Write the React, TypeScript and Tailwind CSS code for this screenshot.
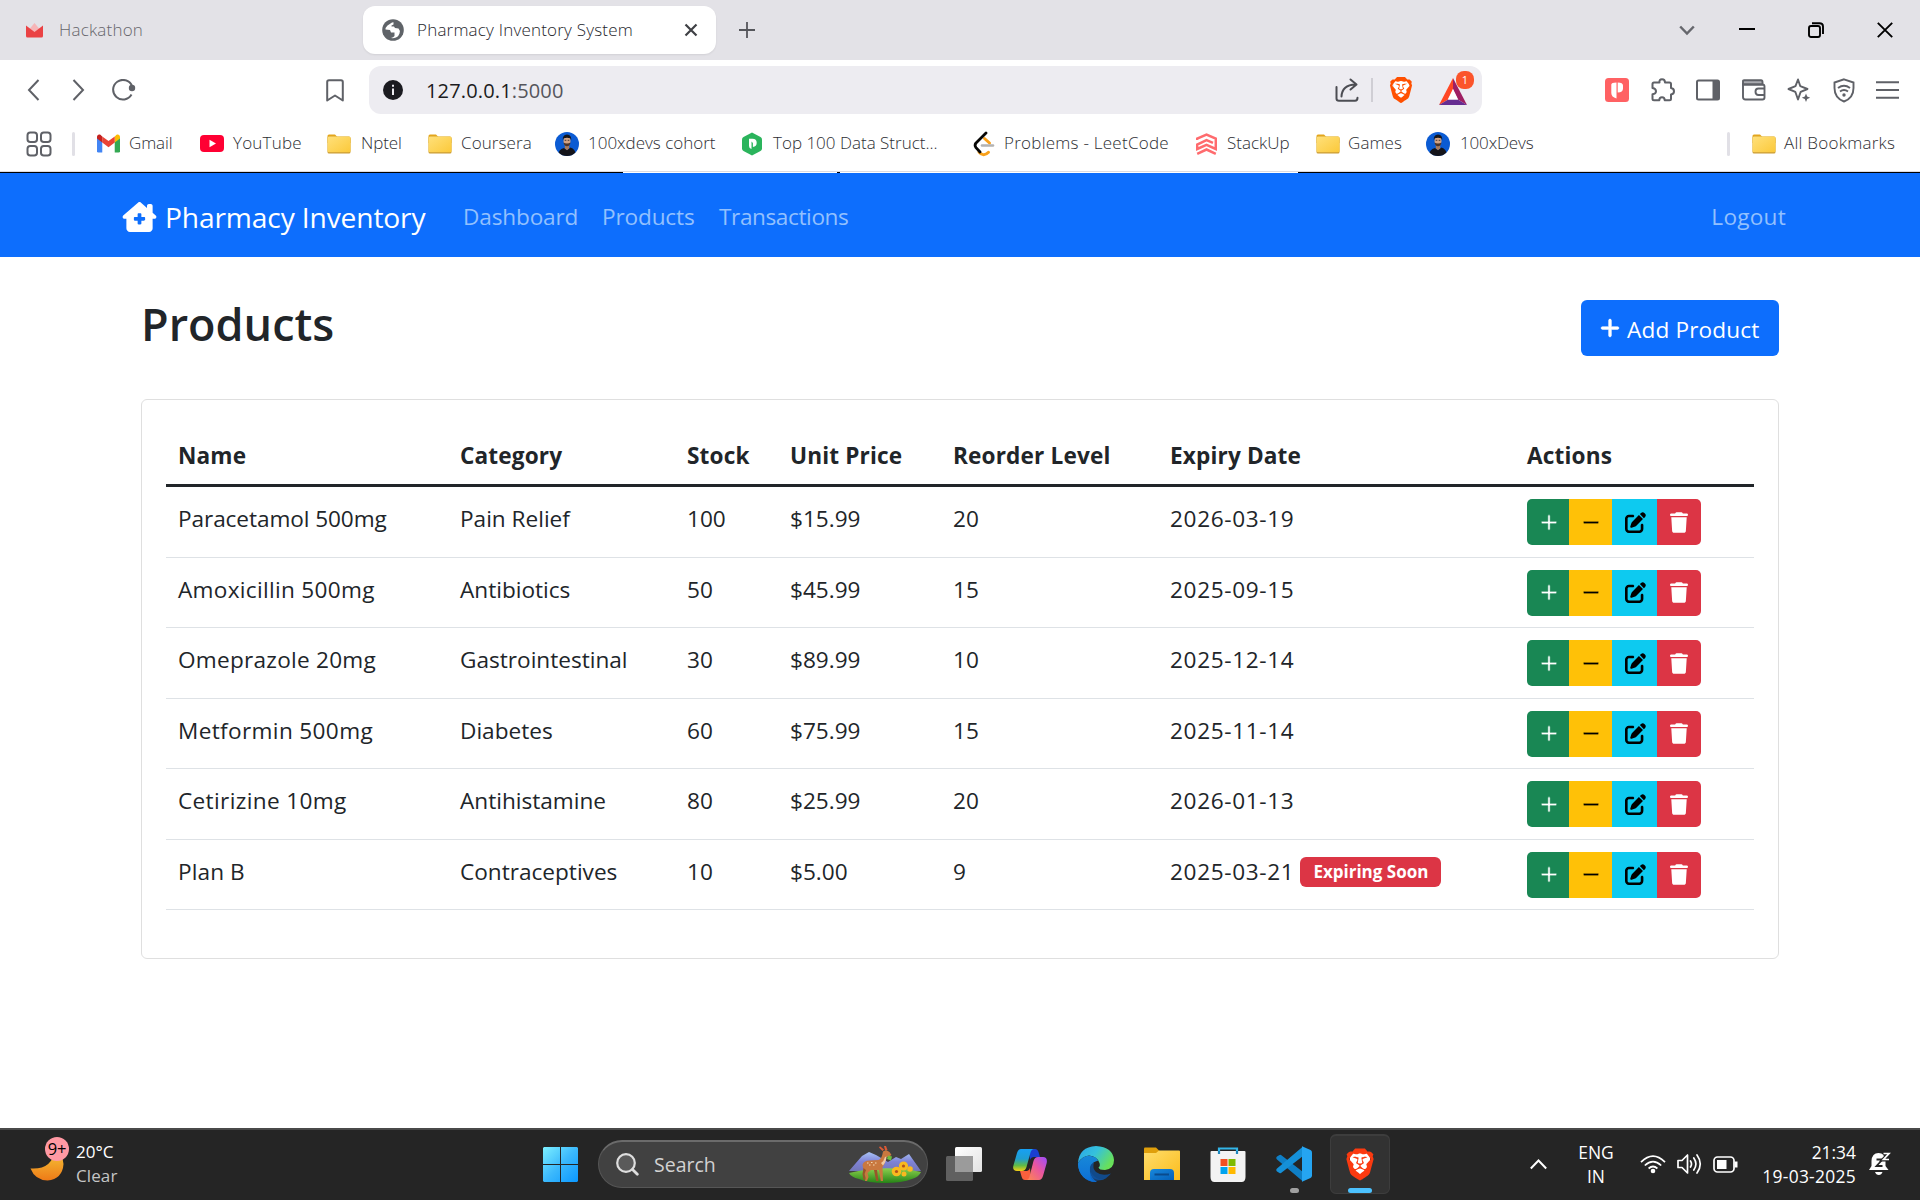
import React from "react";
import { FaHouseChimneyMedical, FaPlus, FaMinus, FaPenToSquare, FaTrash } from "react-icons/fa6";
import { SiBrave } from "react-icons/si";

const products = [
  ["Paracetamol 500mg", "Pain Relief", "100", "$15.99", "20", "2026-03-19"],
  ["Amoxicillin 500mg", "Antibiotics", "50", "$45.99", "15", "2025-09-15"],
  ["Omeprazole 20mg", "Gastrointestinal", "30", "$89.99", "10", "2025-12-14"],
  ["Metformin 500mg", "Diabetes", "60", "$75.99", "15", "2025-11-14"],
  ["Cetirizine 10mg", "Antihistamine", "80", "$25.99", "20", "2026-01-13"],
  ["Plan B", "Contraceptives", "10", "$5.00", "9", "2025-03-21"],
];

const nameTracking = [
  "tracking-[-0.08px]",
  "tracking-[0.3px]",
  "tracking-[0.25px]",
  "tracking-[0.35px]",
  "tracking-[0.35px]",
  "tracking-[0.1px]",
];

function Folder() {
  return (
    <svg width="24" height="20" viewBox="0 0 24 20">
      <defs>
        <linearGradient id="fold" x1="0" y1="0" x2="1" y2="1">
          <stop offset="0" stopColor="#ffe07a" />
          <stop offset="1" stopColor="#fbc93a" />
        </linearGradient>
      </defs>
      <path d="M.5 2Q.5 .5 2 .5h6l2.500 2.500h11q2 0 2 2v4H.5z" fill="#e3a51c" />
      <rect x=".5" y="2.500" width="23" height="17" rx="1.500" fill="#c99b35" />
      <rect x=".5" y="2.500" width="23" height="15.800" rx="1.500" fill="url(#fold)" />
    </svg>
  );
}

function Gmail() {
  return (
    <svg width="23" height="19" viewBox="0 0 24 19">
      <path d="M0 3v14.500Q0 19 1.500 19H5.500V7z" fill="#4285f4" />
      <path d="M24 3v14.500q0 1.500-1.500 1.500h-4V7z" fill="#34a853" />
      <path d="M18.500 2.200V8.500L24 4.400V2.700C24 0 21 -.8 19.200 1.600z" fill="#fbbc04" />
      <path d="M5.500 8.500V2.200L12 7l6.500-4.800v6.300L12 13.400z" fill="#ea4335" />
      <path d="M0 2.700v1.700l5.500 4.100V2.200L4.800 1.600C3 -.8 0 0 0 2.700z" fill="#c5221f" />
    </svg>
  );
}

function YouTube() {
  return (
    <svg width="24" height="17" viewBox="0 0 24 17">
      <rect width="24" height="17" rx="4" fill="#ff0033" />
      <path d="M9.500 4.800v7.400L16 8.500z" fill="#fff" />
    </svg>
  );
}

function Avatar() {
  return (
    <svg width="24" height="24" viewBox="0 0 24 24">
      <defs>
        <clipPath id="round"><circle cx="12" cy="12" r="12" /></clipPath>
      </defs>
      <g clipPath="url(#round)">
        <rect width="24" height="24" fill="#0b5bd3" />
        <path d="M3 24Q3 17.500 9 16l3 2 3.500-2.500q5 1.500 6 9z" fill="#14141a" />
        <path d="M9.800 12h4.400v4.500L12 18.200l-2.200-1.700z" fill="#a87a5e" />
        <ellipse cx="12" cy="9" rx="3.500" ry="4.800" fill="#d3a283" />
        <path d="M7.800 8.500Q7.200 2.800 12 2.500q4.800.3 4.200 6L15.300 6.300q-3.300-1-6.600 0z" fill="#15151b" />
        <path d="M8.600 10.500q1.200 1 3.400 1t3.400-1q-.3 3.800-3.400 3.800t-3.400-3.800z" fill="#4a342c" />
        <path d="M9.700 8.300h1.600M12.700 8.300h1.600" stroke="#251c1c" strokeWidth=".8" />
      </g>
    </svg>
  );
}

function PepHex() {
  return (
    <svg width="22" height="24" viewBox="0 0 22 24">
      <path d="M11 .5 19.500 5q1.500.8 1.500 2.400v9.200q0 1.600-1.500 2.400L11 23.500 2.500 19Q1 18.200 1 16.600V7.400Q1 5.800 2.500 5z" fill="#2bb45c" />
      <path d="M8 6.800h3.500q4.200 0 4.200 4t-3.800 4.100V11L10.500 9.500V17q-2.500-.5-2.500-3z" fill="#fff" />
    </svg>
  );
}

function LeetCode() {
  return (
    <svg width="22" height="26" viewBox="0 0 22 26" fill="none" strokeLinecap="round" strokeLinejoin="round">
      <path d="M11.500 7.500 16.500 12" stroke="#f9a11b" strokeWidth="3" />
      <path d="M9 14.500h11" stroke="#b3b3b3" strokeWidth="2.600" />
      <path d="M6 21q4.500 5.500 9.500.3" stroke="#f9a11b" strokeWidth="3" />
      <path d="M13 2 3 12q-1.800 2.200 0 4.600L7 21" stroke="#070706" strokeWidth="2.800" />
    </svg>
  );
}

function StackUp() {
  return (
    <svg width="21" height="22" viewBox="0 0 21 22" fill="none" stroke="#ff6b6e" strokeWidth="2.500">
      <path d="M1.200 7V5.500L10.500 1.500l9.300 4.200V16L10.500 11.800 1.200 16v-4.500L10.500 7l6.500 2.800" />
      <path d="M1.200 20.800 10.500 16.500l9.300 4.300" />
    </svg>
  );
}

const bookmarks = [
  { w: "w-[103px]", gap: "gap-[9px]", t: "tracking-[-0.1px]", icon: <Gmail />, label: "Gmail" },
  { w: "w-[127px]", gap: "gap-[9px]", t: "tracking-[0.2px]", icon: <YouTube />, label: "YouTube" },
  { w: "w-[101px]", gap: "gap-[10px]", t: "tracking-[-0.1px]", icon: <Folder />, label: "Nptel" },
  { w: "w-[127px]", gap: "gap-[9px]", t: "tracking-[0.1px]", icon: <Folder />, label: "Coursera" },
  { w: "w-[186px]", gap: "gap-[9px]", t: "tracking-[0px]", icon: <Avatar />, label: "100xdevs cohort" },
  { w: "w-[232px]", gap: "gap-[10px]", t: "tracking-[0px]", icon: <PepHex />, label: "Top 100 Data Struct..." },
  { w: "w-[223px]", gap: "gap-[9px]", t: "tracking-[0.25px]", icon: <LeetCode />, label: "Problems - LeetCode" },
  { w: "w-[120px]", gap: "gap-[10px]", t: "tracking-[0px]", icon: <StackUp />, label: "StackUp" },
  { w: "w-[110px]", gap: "gap-[8px]", t: "tracking-[0.1px]", icon: <Folder />, label: "Games" },
  { w: "w-[130px]", gap: "gap-[10px]", t: "tracking-[-0.15px]", icon: <Avatar />, label: "100xDevs" },
];

function TabStrip() {
  return (
    <div className="flex h-[60px] items-center bg-[#e3e2e7]">
      <div className="flex w-[363px] items-center pl-[26px]">
        <svg width="17" height="15" viewBox="0 0 17 15">
          <path d="M3.500 6 8.500 0l5 6-5 5z" fill="#f6b5b7" />
          <path d="M0 2.500 8.500 9 17 2.500V13q0 1.500-1.500 1.500h-14Q0 14.500 0 13z" fill="#ea4244" />
        </svg>
        <span className="ml-[16px] text-[17px] font-light tracking-[0.2px] text-[#66666c]">Hackathon</span>
      </div>
      <div className="flex h-[48px] w-[353px] items-center rounded-[12px] bg-white pl-[19px] shadow-[0_1px_2px_rgba(0,0,0,0.08)]">
        <svg width="22" height="22" viewBox="0 0 22 22">
          <circle cx="11" cy="11" r="10.800" fill="#5f6368" />
          <path d="M10 3.500 5.500 6.500Q3 9 3.500 10.500l4.500.5 1 2.500h3.500V17q-1 1.500-3.500 2 6.500 1 8.500-4.500.8-3.500-1-5l-3.500-.5-1-1.500H9.500V6.500l2-1V3.200z" fill="#fff" />
        </svg>
        <span className="ml-[13px] w-[222px] whitespace-nowrap text-[17px] font-light tracking-[0.2px] text-[#25252b]">Pharmacy Inventory System</span>
        <svg className="ml-[45px]" width="14" height="14" viewBox="0 0 14 14" stroke="#3f4045" strokeWidth="2.200">
          <path d="M1.500 1.500l11 11M12.500 1.500l-11 11" />
        </svg>
      </div>
      <svg className="ml-[23px]" width="16" height="16" viewBox="0 0 16 16" stroke="#55565b" strokeWidth="1.800">
        <path d="M8 0v16M0 8h16" />
      </svg>
      <div className="ml-auto flex items-center pr-[27px]">
        <svg width="16" height="11" viewBox="0 0 16 11" fill="none" stroke="#66676d" strokeWidth="2.500"><path d="M1.200 1.500 8 8.500l6.800-7" /></svg>
        <svg className="ml-[44px]" width="16" height="16" viewBox="0 0 16 16" stroke="#000" strokeWidth="2"><path d="M0 7h16" /></svg>
        <svg className="ml-[53px]" width="16" height="16" viewBox="0 0 16 16" fill="none" stroke="#000" strokeWidth="1.900">
          <rect x="1" y="4" width="11" height="11" rx="2" />
          <path d="M4 1.200h7.500Q15 1.200 15 4.500V12" />
        </svg>
        <svg className="ml-[53px]" width="16" height="16" viewBox="0 0 16 16" stroke="#000" strokeWidth="1.900"><path d="M.8.8l14.400 14.400M15.200.8.800 15.200" /></svg>
      </div>
    </div>
  );
}

function Toolbar() {
  return (
    <div className="flex h-[60px] items-center">
      <div className="flex w-[369px] items-center pl-[27px] text-[#5f6167]">
        <svg width="13" height="22" viewBox="0 0 13 22" fill="none" stroke="currentColor" strokeWidth="2"><path d="M11.500 1 2 11l9.500 10" /></svg>
        <svg className="ml-[32px]" width="13" height="22" viewBox="0 0 13 22" fill="none" stroke="currentColor" strokeWidth="2"><path d="M1.500 1 11 11l-9.500 10" /></svg>
        <svg className="ml-[27px]" width="24" height="22" viewBox="0 0 24 22" fill="none" stroke="currentColor" strokeWidth="2">
          <path d="M19.500 15.500A9.800 9.800 0 1 1 20 7" />
          <circle cx="20" cy="9" r="3.200" fill="currentColor" stroke="none" />
        </svg>
        <svg className="ml-[190px]" width="18" height="23" viewBox="0 0 18 23" fill="none" stroke="currentColor" strokeWidth="2" strokeLinejoin="round">
          <path d="M1.200 21.500V3q0-1.800 1.800-1.800h12q1.800 0 1.800 1.800v18.500L9 16.500z" />
        </svg>
      </div>
      <div className="flex h-[48px] w-[1113px] items-center rounded-[12px] bg-[#edecf1] pl-[14px]">
        <svg width="20" height="20" viewBox="0 0 20 20">
          <circle cx="10" cy="10" r="10" fill="#1b1b20" />
          <path d="M10 8.500V15M10 4.800v2" stroke="#edecf1" strokeWidth="2" />
        </svg>
        <span className="ml-[23px] pt-[1px] text-[20px] tracking-[0.15px] text-[#1b1b20]">127.0.0.1<span className="text-[#55555c]">:5000</span></span>
        <div className="ml-auto flex items-center pr-[8px]">
          <svg width="24" height="24" viewBox="0 0 24 24" fill="none" stroke="#4c4d53" strokeWidth="2" strokeLinecap="round" strokeLinejoin="round">
            <path d="M1.500 9v11.500Q1.500 22.800 4 22.800h16q2.500 0 2.500-3M6.500 18.500Q7 7 20.500 6.500M15.500 1.500l6 5-6 5" />
          </svg>
          <div className="ml-[12px] h-[24px] w-[2px] bg-[#cfced4]" />
          <div className="relative ml-[15px] flex items-center justify-center">
            <div className="absolute h-[20px] w-[15px] rounded-b-[8px] bg-white" />
            <SiBrave className="relative h-[30px] w-[26px] text-[#ff5000]" />
          </div>
          <div className="relative ml-[24px] h-[36px] w-[36px]">
            <svg className="absolute left-[1px] top-[6px]" width="28" height="27" viewBox="0 0 28 25" preserveAspectRatio="none">
              <path d="M14 0 0 25l9.200-5.200L14 11z" fill="#ff4724" />
              <path d="M14 0l14 25-9.200-5.200L14 11z" fill="#9e1f63" />
              <path d="M0 25h28l-9.200-5.200H9.200z" fill="#662d91" />
              <path d="M14 10 8.800 20h10.400z" fill="#fff" />
            </svg>
            <div className="absolute right-0 -top-[1px] flex h-[18px] w-[18px] items-center justify-center rounded-[8px] bg-[#fb542b] text-[11px] text-white">1</div>
          </div>
        </div>
      </div>
      <div className="flex flex-1 items-center justify-between pl-[123px] pr-[21px] text-[#5f6167]">
        <svg width="24" height="24" viewBox="0 0 24 24">
          <rect width="24" height="24" rx="3.500" fill="#ff6163" />
          <path d="M11.500 4.500Q6.300 4.500 6.300 6.500v8.500q0 4 5.200 5.500zM12.700 4.500q5.300.2 5.300 3v3q0 4-5.300 4z" fill="#fff" />
        </svg>
        <svg width="24" height="24" viewBox="0 0 24 24" fill="none" stroke="currentColor" strokeWidth="2" strokeLinejoin="round">
          <path d="M3 4.500h5.500Q8 1.200 11 1.200t3 3.300h4.500q1.500 0 1.500 1.500v4q3 .3 3 3.200T20 16.500v4.300q0 1.500-1.500 1.500h-4.800q0-3-2.700-3t-2.700 3H3q-1.500 0-1.500-1.500v-4.500q3.500-.3 3.500-3T1.500 10V6Q1.500 4.500 3 4.500z" />
        </svg>
        <svg width="24" height="22" viewBox="0 0 24 22" fill="none" stroke="currentColor" strokeWidth="2">
          <rect x="1" y="1.500" width="22" height="19" rx="1.500" />
          <path d="M16.500 1h6v20h-6z" fill="currentColor" stroke="none" />
        </svg>
        <svg width="24" height="22" viewBox="0 0 24 22" fill="none" stroke="currentColor" strokeWidth="1.900">
          <path d="M2 1.200h17q1.500 0 1.500 1.800v2.500H1V2.200q0-1 1-1z" fill="#aaabb0" />
          <path d="M1 4v14q0 2.500 2.500 2.500h17q2 0 2-2V7.500q0-2-2-2H1M22.500 9.500h-6q-3 0-3 3.200t3 3.300h6" />
        </svg>
        <svg width="24" height="24" viewBox="0 0 24 24" fill="none" stroke="currentColor" strokeWidth="1.900" strokeLinejoin="round">
          <path d="M11 1.500 13.300 8.200 20.500 11 13.700 13.800 11 21.500 8.300 13.800 1.500 11 8.500 8.200z" />
          <path d="M19 15.500l1.200 3 3 1.200-3 1.300-1.200 3-1.200-3-3-1.300 3-1.200z" fill="currentColor" stroke="none" />
        </svg>
        <svg width="22" height="25" viewBox="0 0 22 25" fill="none" stroke="currentColor" strokeWidth="1.900">
          <path d="M11 1.300 20.500 4.500V10q0 10-9.500 13.500Q1.500 20 1.500 10V4.500z" />
          <path d="M5 10q6-4.500 12 0M7 13.500q4-3 8 0" />
          <circle cx="11" cy="17" r="1.700" fill="currentColor" stroke="none" />
        </svg>
        <svg width="23" height="18" viewBox="0 0 23 18" stroke="currentColor" strokeWidth="2"><path d="M0 1.200h23M0 9h23M0 16.800h23" /></svg>
      </div>
    </div>
  );
}

function Bookmarks() {
  return (
    <div className="flex h-[51px] items-center whitespace-nowrap pb-[4px] text-[17px] font-light text-[#2d2e33]">
      <svg className="ml-[26px]" width="26" height="26" viewBox="0 0 26 26" fill="none" stroke="#5f6167" strokeWidth="2">
        <rect x="1.500" y="1.500" width="9.500" height="9.500" rx="2.800" />
        <rect x="15" y="1.500" width="9.500" height="9.500" rx="2.800" />
        <rect x="1.500" y="15" width="9.500" height="9.500" rx="2.800" />
        <rect x="15" y="15" width="9.500" height="9.500" rx="2.800" />
      </svg>
      <div className="ml-[20px] h-[24px] w-[3px] rounded bg-[#e1e0e6]" />
      <div className="ml-[22px] flex">
        {bookmarks.map((b, i) => (
          <div key={i} className={`flex items-center ${b.w} ${b.gap} ${b.t}`}>
            {b.icon}
            <span className="-mt-[2px]">{b.label}</span>
          </div>
        ))}
      </div>
      <div className="ml-auto h-[24px] w-[3px] rounded bg-[#e1e0e6]" />
      <div className="ml-[22px] flex w-[168px] items-center gap-[8px]">
        <Folder />
        <span className="-mt-[2px] tracking-[0.25px]">All Bookmarks</span>
      </div>
    </div>
  );
}

function Navbar() {
  return (
    <nav className="flex h-[84px] items-center bg-[#0d6efd] pl-[122px] pr-[134px] text-[22.6px] tracking-[-0.15px] text-[#92c0fe]">
      <FaHouseChimneyMedical className="mt-[3px] h-[30px] w-[35px] text-white" />
      <span className="ml-[8px] w-[298px] whitespace-nowrap pt-[4px] text-[28.2px] text-white">Pharmacy Inventory</span>
      <span className="w-[139px] pt-[4px]">Dashboard</span>
      <span className="w-[117px] pt-[4px]">Products</span>
      <span className="pt-[4px] tracking-[-0.4px]">Transactions</span>
      <span className="ml-auto pt-[4px] tracking-[0.25px]">Logout</span>
    </nav>
  );
}

function Actions() {
  return (
    <div className="flex h-[46px] w-[174px] overflow-hidden rounded-[5px]">
      <div className="flex w-[42px] items-center justify-center bg-[#198754] pl-[2px] text-white"><FaPlus className="h-[19px] w-[18px] [stroke:#198754] [stroke-width:16]" /></div>
      <div className="flex w-[43px] items-center justify-center bg-[#ffc107] pl-[1px] text-black"><FaMinus className="h-[19px] w-[18px] [stroke:#ffc107] [stroke-width:16]" /></div>
      <div className="flex w-[45px] items-center justify-center bg-[#0dcaf0] pl-[2px] text-black"><FaPenToSquare className="h-[21px] w-[21px]" /></div>
      <div className="flex w-[44px] items-center justify-center bg-[#dc3545] text-white"><FaTrash className="h-[21px] w-[18px]" /></div>
    </div>
  );
}

function ProductTable() {
  const cols = "grid grid-cols-[282px_227px_103px_163px_217px_357px_239px]";
  return (
    <div className="h-[560px] rounded-[6px] border border-[#dfdfdf] px-[24px] pt-[24px] text-[22.6px] leading-[36px] text-[#212529]">
      <div className={`${cols} h-[63px] border-b-[3px] border-[#212529] pt-[14px] font-bold tracking-[0.15px]`}>
        {["Name", "Category", "Stock", "Unit Price", "Reorder Level", "Expiry Date", "Actions"].map((h) => (
          <div key={h} className="pl-[12px]">{h}</div>
        ))}
      </div>
      {products.map((p, row) => (
        <div key={p[0]} className={`${cols} h-[70.5px] border-b border-[#dee2e6] pt-[12px]`}>
          {p.slice(0, 5).map((v, i) => (
            <div key={i} className={`pl-[12px] pt-[2px] ${i === 0 ? nameTracking[row] : ""}`}>{v}</div>
          ))}
          <div className="flex pl-[12px] pt-[2px]">
            <span className="tracking-[0.65px]">{p[5]}</span>
            {p[0] === "Plan B" && (
              <span className="ml-[6px] mt-[3px] flex h-[30px] w-[141px] items-center justify-center whitespace-nowrap rounded-[6px] bg-[#dc3545] pt-[1px] text-[17px] font-bold text-white">Expiring Soon</span>
            )}
          </div>
          <div className="pl-[12px]"><Actions /></div>
        </div>
      ))}
    </div>
  );
}

function Deer() {
  return (
    <svg width="74" height="38" viewBox="0 0 74 38">
      <defs>
        <linearGradient id="mtn" x1="0" y1="0" x2="0" y2="1"><stop offset="0" stopColor="#a9c4f5" /><stop offset=".5" stopColor="#7f83d8" /><stop offset="1" stopColor="#7376b8" /></linearGradient>
        <linearGradient id="grass" x1="0" y1="0" x2="0" y2="1"><stop offset="0" stopColor="#8ccf4e" /><stop offset="1" stopColor="#258416" /></linearGradient>
      </defs>
      <path d="M1 25 14 10l7-4 7 3 12 7 8-5 5 2 8-5 12 17z" fill="url(#mtn)" />
      <path d="M1 27q36-9 72-1-2 5-9 7-10 4-27 4t-26-4Q3 31 1 27z" fill="url(#grass)" />
      <path d="M14.500 19q1-4.500 7-4.500l9-.5q3-1 4-6l.5-2.500 3-1.500 3.500 2 2 3-2.500 1.500-3.500 1q0 6-3 9.500l.5 14h-2.200L31 24h-8l-3.500 3 1 4-1.500 4h-2l.5-4-1.500-5z" fill="#c9783f" />
      <path d="M29 24l1.500 11h-2.300L26 24zM18 24l-1.500 4 1 5.500h-2L14.500 28l1-6z" fill="#98552a" />
      <path d="M34.500 5 31 1.500l1-1.200 4 3.200zM37 4l-1-4h2l1.500 4z" fill="#dc5a35" />
      <path d="M33 17q3-2 4-6l1.500-.5q0 5-3.500 9z" fill="#f0c9a0" />
      <path d="M19 17h1.500M23 16.500h1.500M27 17h1.500M21 19h1.500M25 19h1.500" stroke="#f6d9b4" />
      <path d="M40 9.500l4 1-1 4-4-1.500z" fill="#6fbe3c" />
      <g fill="#f9b91f">
        <circle cx="48.500" cy="25.500" r="4.800" /><circle cx="55.500" cy="20" r="4.600" /><circle cx="62" cy="23" r="2.800" /><circle cx="56" cy="28" r="2.500" />
      </g>
      <circle cx="48.500" cy="25.500" r="1.600" fill="#b3541b" />
      <circle cx="55.500" cy="20" r="1.600" fill="#b3541b" />
    </svg>
  );
}

function Copilot() {
  return (
    <svg width="34" height="31" viewBox="0 0 34 31">
      <defs>
        <linearGradient id="cpa" x1="0" y1="0" x2="0" y2="1"><stop offset="0" stopColor="#17a0f4" /><stop offset=".45" stopColor="#1f9ed0" /><stop offset=".75" stopColor="#62bb46" /><stop offset="1" stopColor="#f6cf14" /></linearGradient>
        <linearGradient id="cpb" x1="1" y1="0" x2="0" y2="1"><stop offset="0" stopColor="#9b4dff" /><stop offset=".45" stopColor="#e855a0" /><stop offset="1" stopColor="#ff8a4a" /></linearGradient>
      </defs>
      <path d="M16 0h6q2.500 0 3.500 3l1.500 5h-6q-3 0-4 3z" fill="#1c3fd0" />
      <path d="M18 31h-6q-2.500 0-3.300-3L7 22h7q2 0 3-3z" fill="#f8603d" />
      <path d="M8 0h13q-2.500 0-3.500 3.500L13.500 18Q12.300 22 9 22H4Q-.7 22 .3 17L4 4Q5.300 0 8 0z" fill="url(#cpa)" />
      <path d="M26 31H13q2.500 0 3.500-3.500L20.500 12Q21.700 8 25 8h5q4.700 0 3.700 6L30 27q-1.300 4-4 4z" fill="url(#cpb)" />
    </svg>
  );
}

function Edge() {
  return (
    <svg width="36" height="36" viewBox="0 0 36 36">
      <defs>
        <linearGradient id="eda" x1="0" y1="0" x2="1" y2=".5"><stop offset="0" stopColor="#2aa5e8" /><stop offset=".5" stopColor="#35c1dc" /><stop offset="1" stopColor="#68e05a" /></linearGradient>
        <linearGradient id="edb" x1="0" y1="0" x2="0" y2="1"><stop offset="0" stopColor="#1788d8" /><stop offset="1" stopColor="#0d6fd6" /></linearGradient>
      </defs>
      <path d="M0 18A18 18 0 0 0 19 36Q10 30 13 21q2-6 6-6-8-9-19 3z" fill="url(#edb)" />
      <path d="M12 19Q9 34 23 34q5-.5 10-6.500-9 3-15-1.500-4-4-2-9.500z" fill="#114a8b" />
      <path d="M0 17Q1 1 18 0q17 1 18 14 0 9-9 10-6 0-6.500-2.500 2-1.500 1-4.500Q19 10 11 9.500 4 10 0 17z" fill="url(#eda)" />
      <path d="M0 17Q6 8 13 10q6 1 7 5-6-1-8 6-1.500 8 6 14.900Q1 35 0 17z" fill="url(#edb)" />
      <path d="M6 33Q18 38 29 32 18 36 13 26 10 33 18 36z" fill="#0f58ad" opacity=".5" />
    </svg>
  );
}

function Taskbar() {
  const slot = "flex h-full w-[66px] items-center justify-center";
  return (
    <div className="flex h-[72px] items-center border-t-2 border-[#4a4a4a] bg-[#252525] pb-[2px] text-white">
      <div className="flex w-[543px] items-center pl-[30px]">
        <div className="relative -mt-[4px] h-[46px] w-[41px]">
          <svg className="absolute left-0 top-[8px]" width="35" height="35" viewBox="0 0 35 35">
            <defs><linearGradient id="moon" x1="0" y1="0" x2="0" y2="1"><stop offset="0" stopColor="#f5c83a" /><stop offset="1" stopColor="#ee7a17" /></linearGradient></defs>
            <path d="M.5 21.500Q22 23 25 3q8 4 8.500 14-1 15-16 16.500Q5 33 .5 21.500z" fill="url(#moon)" />
          </svg>
          <div className="absolute left-[15px] -top-[2px] flex h-[24px] w-[24px] items-center justify-center rounded-full bg-[#ff99a4] text-[16.5px] tracking-[-0.3px] text-black">9+</div>
        </div>
        <div className="ml-[5px] text-[17px] leading-[24px]">
          <div>20°C</div>
          <div className="tracking-[0.1px] text-[#c5c5c5]">Clear</div>
        </div>
      </div>
      <svg width="35" height="35" viewBox="0 0 35 35">
        <defs><linearGradient id="win" x1="0" y1="0" x2="1" y2="1"><stop offset="0" stopColor="#7df0ff" /><stop offset=".5" stopColor="#3cb9fc" /><stop offset="1" stopColor="#0a97ff" /></linearGradient></defs>
        <path d="M1 0h16v17H0V1zM18 0h16l1 1v16H18zM0 18h17v17H1l-1-1zM18 18h17v16l-1 1H18z" fill="url(#win)" />
      </svg>
      <div className="ml-[20px] mr-[3px] flex h-[48px] w-[330px] items-center rounded-full border border-t-2 border-[#565656] border-t-[#6b6b6b] bg-[#414141] pl-[17px]">
        <svg width="23" height="23" viewBox="0 0 23 23" fill="none" stroke="#dedede" strokeLinecap="round">
          <circle cx="10" cy="10" r="8.800" strokeWidth="2.200" fill="#5a5a5a" />
          <path d="M16.500 16.500l4.800 4.800" strokeWidth="2.800" />
        </svg>
        <span className="ml-[15px] text-[19.5px] text-[#d2d2d2]">Search</span>
        <div className="ml-auto mr-[5px]"><Deer /></div>
      </div>
      <div className={slot}>
        <svg width="36" height="34" viewBox="0 0 36 34">
          <defs><linearGradient id="tv" x1="0" y1="0" x2="1" y2="1"><stop offset="0" stopColor="#fff" /><stop offset="1" stopColor="#e2e2e2" /></linearGradient></defs>
          <rect x="9" width="27" height="25" rx="1.500" fill="url(#tv)" />
          <rect y="9" width="27" height="25" rx="1.500" fill="#606060" />
          <path d="M9 9h18v16H9z" fill="#9b9b9b" />
        </svg>
      </div>
      <div className={slot}><Copilot /></div>
      <div className={slot}><Edge /></div>
      <div className={slot}>
        <svg width="36" height="34" viewBox="0 0 36 34">
          <defs>
            <linearGradient id="exp" x1="0" y1="0" x2="1" y2="1"><stop offset="0" stopColor="#ffdd6b" /><stop offset="1" stopColor="#fbbc1c" /></linearGradient>
            <linearGradient id="expb" x1="0" y1="0" x2="1" y2="1"><stop offset="0" stopColor="#1888dc" /><stop offset="1" stopColor="#0560b8" /></linearGradient>
          </defs>
          <path d="M0 1.500Q0 .5 1 .5h11l4 4-4 4H0z" fill="#e09f0b" />
          <path d="M0 6h12l3-2.500h20q1 0 1 1V33H0z" fill="url(#exp)" />
          <path d="M6 33v-7q0-4 4-4h16q4 0 4 4v7z" fill="url(#expb)" />
          <path d="M10.500 27.500h14.500" stroke="#0a4b8c" strokeWidth="2" />
        </svg>
      </div>
      <div className={slot}>
        <svg width="36" height="35" viewBox="0 0 36 35">
          <path d="M9 7V1.500h18V7" fill="none" stroke="#33b5e8" strokeWidth="2.200" />
          <path d="M.5 5q0-1 1-1h33q1 0 1 1v25q0 5-4 5h-27q-4 0-4-5z" fill="#f3f3f3" />
          <path d="M9 4v3M27 4v3" stroke="#1d86bd" strokeWidth="2.200" />
          <path d="M10.500 12h7v7h-7z" fill="#f25022" />
          <path d="M18.500 12h7v7h-7z" fill="#7fba00" />
          <path d="M10.500 20h7v7h-7z" fill="#00a4ef" />
          <path d="M18.500 20h7v7h-7z" fill="#ffb900" />
        </svg>
      </div>
      <div className={`${slot} relative`}>
        <svg width="36" height="36" viewBox="0 0 36 36">
          <path d="M1 10.500 3.500 9q1.200-.5 2.200.4L27 26v9.500L1 13.500Q-.5 12 1 10.500z" fill="#0f7fc6" />
          <path d="M1 25.500 3.500 27q1.200.5 2.200-.4L27 10V.5L1 22.500Q-.5 24 1 25.500z" fill="#1590d8" />
          <path d="M26 .3 34.500 4Q36 4.800 36 6.500v23q0 1.700-1.500 2.500L26 35.800z" fill="#25a5f2" />
        </svg>
        <div className="absolute bottom-[5px] left-[29px] h-[5px] w-[9px] rounded-full bg-[#a0a0a0]" />
      </div>
      <div className={slot}>
        <div className="relative flex h-[60px] w-[60px] items-center justify-center rounded-[6px] border border-t-2 border-[#3d3d3d] bg-[#323232]">
          <div className="absolute h-[25px] w-[20px] rounded-b-[10px] bg-white" />
          <SiBrave className="relative h-[37px] w-[32px] text-[#fb3a10]" />
          <div className="absolute bottom-0 left-[17px] h-[5px] w-[24px] rounded-full bg-[#4cc2ff]" />
        </div>
      </div>
      <div className="ml-auto flex items-center pr-[29px] text-[17.4px] leading-[24px]">
        <svg width="17" height="11" viewBox="0 0 17 11" fill="none" stroke="#fff" strokeWidth="2"><path d="M.8 9.500 8.500 1.500l7.700 8" /></svg>
        <div className="ml-[31px] w-[36px] text-center"><div>ENG</div><div>IN</div></div>
        <svg className="ml-[26px]" width="26" height="20" viewBox="0 0 26 20" fill="none" stroke="#fff" strokeWidth="1.700">
          <path d="M1 8.200Q13-3.800 25 8.200M4.800 11.500q8.200-7.800 16.400 0M8.600 14.500q4.400-4 8.800 0" />
          <circle cx="13" cy="17" r="2.300" fill="#fff" stroke="none" />
        </svg>
        <svg className="ml-[11px]" width="25" height="22" viewBox="0 0 25 22" fill="none" stroke="#fff" strokeWidth="1.700" strokeLinejoin="round">
          <path d="M1 7.500h4L10.500 2v18L5 14.500H1z" />
          <path d="M13.500 8q2 3 0 6M16.800 5q4.200 6 0 12M20 2q6.500 9 0 18" strokeLinecap="round" />
        </svg>
        <svg className="ml-[11px]" width="25" height="17" viewBox="0 0 25 17" fill="none" stroke="#fff" strokeWidth="1.700">
          <rect x="1" y="1" width="20" height="15" rx="3.500" />
          <path d="M4 4h9.500v9H4z" fill="#fff" stroke="none" />
          <path d="M23 5.500v6" strokeWidth="3" />
        </svg>
        <div className="ml-[17px] w-[101px] whitespace-nowrap text-right"><div>21:34</div><div className="tracking-[0.3px]">19-03-2025</div></div>
        <svg className="ml-[13px]" width="22" height="24" viewBox="0 0 22 24">
          <path d="M9.500 1Q16 1 16.500 9v5l3 4H0l2.500-4V9Q3 1 9.500 1zM6 20h7.500q-1 3-3.700 3T6 20z" fill="#fff" />
          <path d="M7.500 7.500h6l-6 6.500h6" fill="none" stroke="#252525" strokeWidth="1.800" />
          <path d="M14.500 1.500h5.500l-5.500 6h5.500" fill="none" stroke="#252525" strokeWidth="4" />
          <path d="M14.500 1.500h5.500l-5.500 6h5.500" fill="none" stroke="#fff" strokeWidth="1.700" />
        </svg>
      </div>
    </div>
  );
}

export default function App() {
  return (
    <div className="flex h-[1200px] w-[1920px] flex-col overflow-hidden bg-white font-['Open_Sans','Noto_Sans',sans-serif]">
      <TabStrip />
      <Toolbar />
      <Bookmarks />
      <div className="h-px bg-[#dcdbe1]" />
      <div className="flex h-px">
        <div className="w-[623px] bg-black" />
        <div className="ml-[214px] w-[3px] bg-black" />
        <div className="ml-auto w-[622px] bg-black" />
      </div>
      <Navbar />
      <main className="flex-1 px-[141px] pt-[43px]">
        <div className="flex justify-between">
          <h1 className="-mt-[5px] text-[45px] font-semibold leading-[58px] text-[#212529]">Products</h1>
          <button className="flex h-[56px] w-[198px] items-center rounded-[6px] bg-[#0d6efd] pl-[19px] text-[22.6px] text-white">
            <FaPlus className="mr-[7px] h-[22px] w-[20px] [stroke:white] [stroke-width:12]" />
            <span className="whitespace-nowrap pt-[3px] tracking-[0.15px]">Add Product</span>
          </button>
        </div>
        <div className="mt-[43px]"><ProductTable /></div>
      </main>
      <Taskbar />
    </div>
  );
}
